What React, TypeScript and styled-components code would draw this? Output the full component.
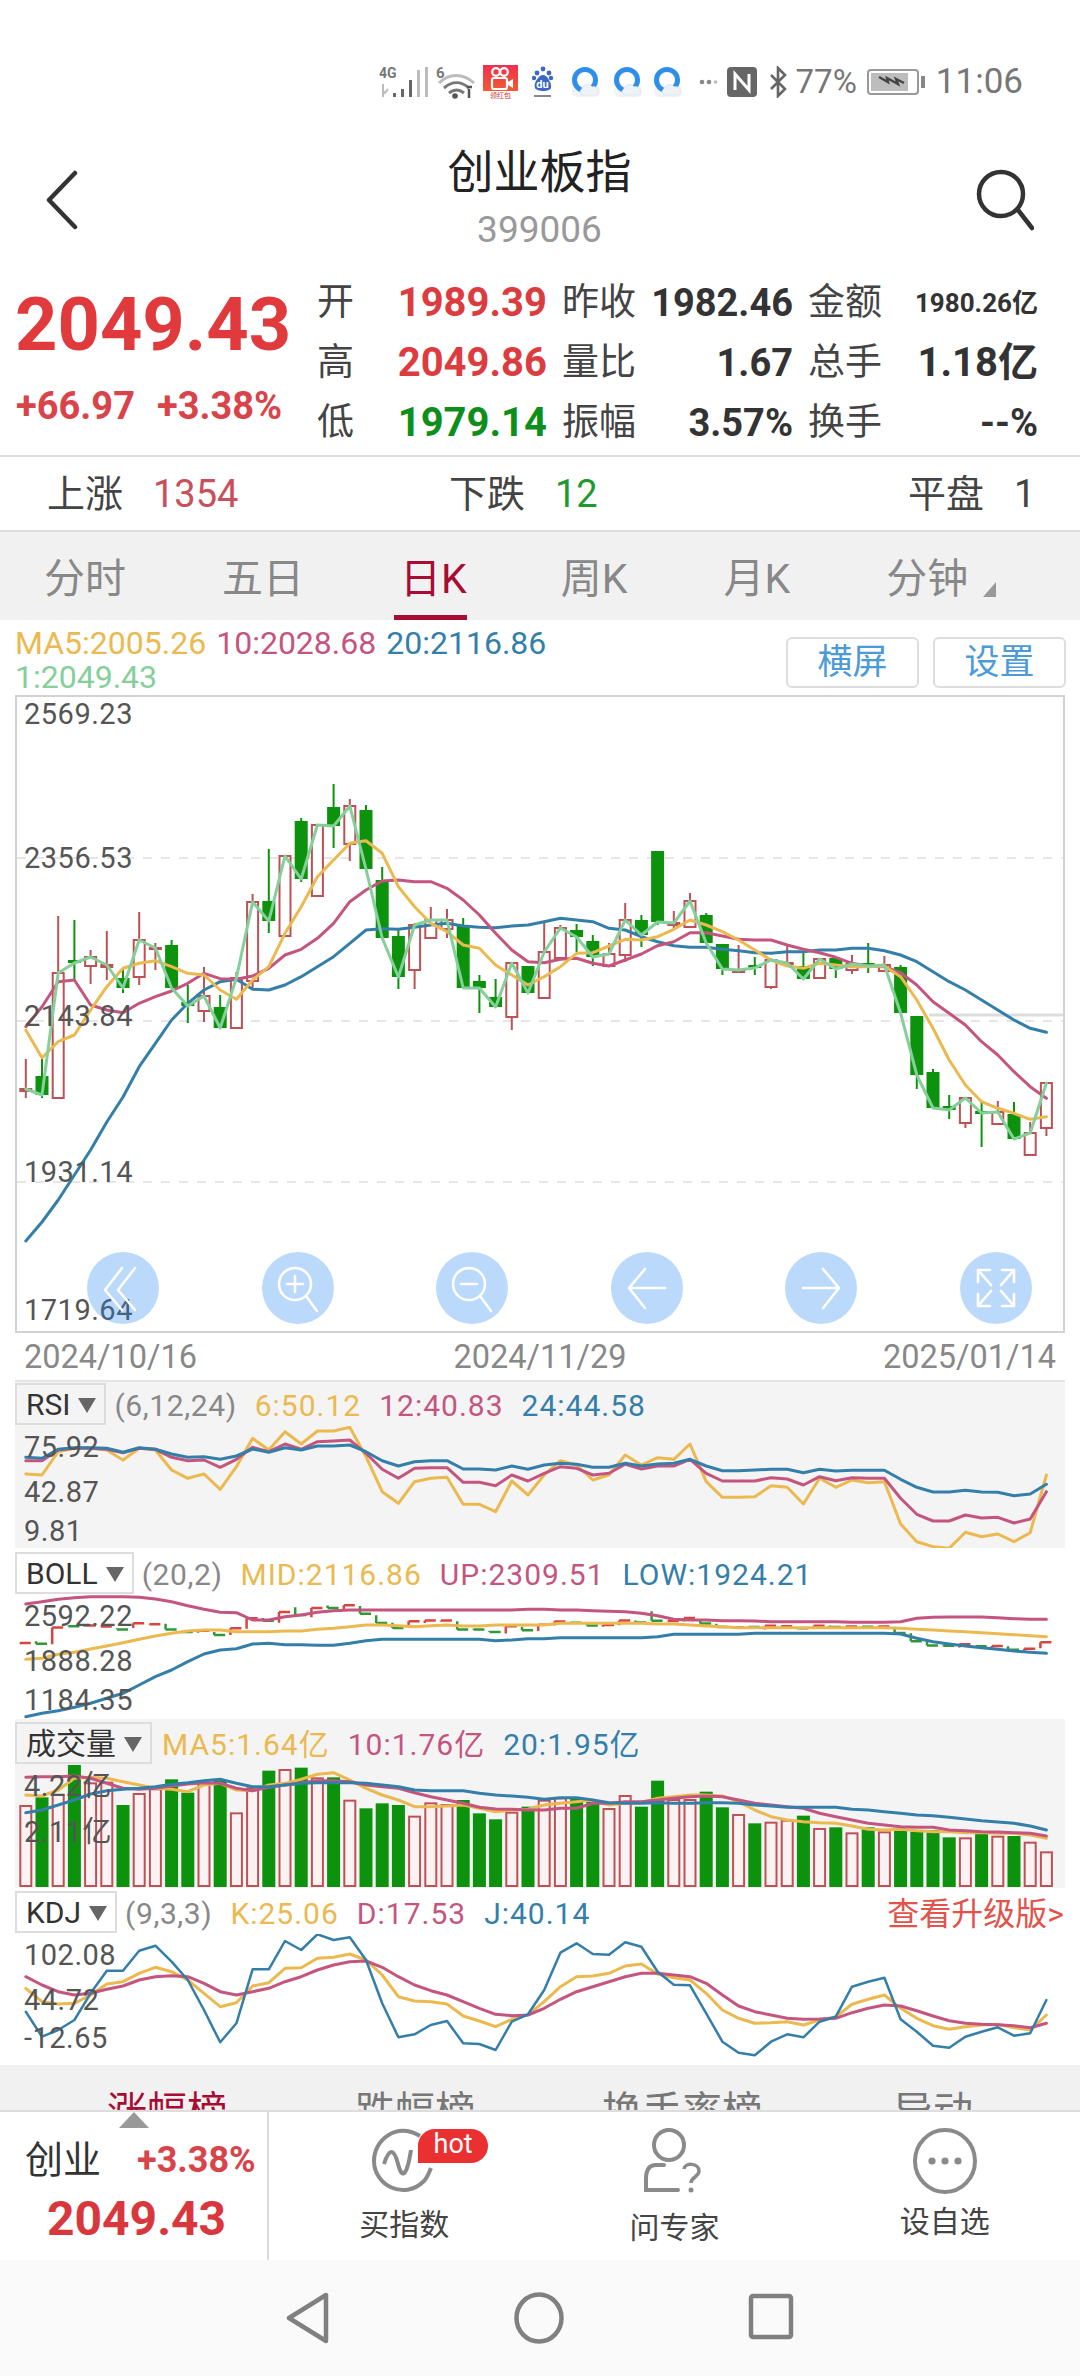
import React from "react";
import styled, { createGlobalStyle } from "styled-components";

const FONT = `Roboto, "Noto Sans CJK SC", "Noto Sans", sans-serif`;
const ORANGE = "#ebb94f";
const PINK = "#c4557f";
const BLUE = "#347fa9";
const LIME = "#85cf9b";
const RED = "#e03a3d";
const GREEN = "#0c920c";
const CRED = "#bd5156";

const Global = createGlobalStyle`
  html, body { margin: 0; padding: 0; background: #fff; }
  body { font-family: ${FONT}; }
  * { box-sizing: border-box; }
`;

const Page = styled.div`
  width: 1080px; height: 2376px; overflow: hidden; position: relative;
  display: flex; flex-direction: column; background: #fff; color: #333;
`;

/* status bar */
const StatusBar = styled.div`
  height: 130px; padding: 65px 57px 0 0; display: flex; justify-content: flex-end; align-items: flex-start;
`;
const StatusItems = styled.div`
  display: flex; align-items: center; height: 34px;
`;
const StatusText = styled.span<{ $size: number; $ml: number }>`
  font-size: ${p => p.$size}px; color: #777; margin-left: ${p => p.$ml}px; line-height: 34px; white-space: nowrap;
`;
const StatusIcon = styled.svg<{ $ml: number }>`
  margin-left: ${p => p.$ml}px; flex: none; display: block;
`;

/* header */
const Header = styled.div`
  height: 140px; display: grid; grid-template-columns: 1fr auto 1fr; align-items: center; padding: 0 46px 0 45px;
`;
const BackBtn = styled.svg`display: block;`;
const SearchBtn = styled.svg`display: block; justify-self: end;`;
const TitleBlock = styled.div`
  display: flex; flex-direction: column; align-items: center;
`;
const Title = styled.div`font-size: 46px; line-height: 60px; color: #222;`;
const Code = styled.div`font-size: 37px; line-height: 56px; color: #999;`;

/* quote */
const Quote = styled.div`
  height: 187px; display: flex; padding-top: 2px; border-bottom: 2px solid #ddd;
`;
const QuoteLeft = styled.div`width: 317px; padding-left: 15px; display: flex; flex-direction: column;`;
const BigPrice = styled.div`font-size: 74px; font-weight: 700; line-height: 106px; color: ${RED};`;
const Deltas = styled.div`
  display: flex; gap: 22px; font-size: 38px; font-weight: 700; color: #d9444a; line-height: 40px; margin-top: 8px; padding-left: 1px;
`;
const QuoteGrid = styled.div`
  display: grid; grid-template-columns: 80px 150px 87px 159px 88px 157px; grid-auto-rows: 60px; align-items: center; padding-top: 1px;
`;
const QLabel = styled.div<{ $pad?: boolean }>`
  font-size: 37px; color: #444; padding-left: ${p => (p.$pad ? 15 : 0)}px; line-height: 60px; white-space: nowrap;
`;
const QVal = styled.div<{ $color?: string; $size?: number }>`
  font-size: ${p => p.$size ?? 38}px; font-weight: 700; color: ${p => p.$color ?? "#333"}; text-align: right; line-height: 60px; white-space: nowrap;
`;

/* up/down counts */
const Stats = styled.div`
  height: 75px; display: grid; grid-template-columns: 402px 459px 1fr; align-items: center; padding-left: 47px; border-bottom: 2px solid #ddd; font-size: 38px; color: #444;
`;
const StatCell = styled.div`display: flex; align-items: baseline; gap: 30px; white-space: nowrap; line-height: 50px;`;
const StatNum = styled.span<{ $color: string }>`color: ${p => p.$color};`;

/* tabs */
const Tabs = styled.div`
  height: 88px; background: #f1f1f1; display: flex; padding-left: 44px; gap: 96px; flex: none;
`;
const Tab = styled.div<{ $active?: boolean }>`
  font-size: 41px; line-height: 94px; height: 88px; white-space: nowrap; display: flex; align-items: flex-start;
  color: ${p => (p.$active ? "#a80b33" : "#888")};
  ${p => p.$active ? `border-bottom: 5px solid #a80b33; margin: 0 -2px 0 -6px; padding-left: 6px;` : ""}
`;
const TabTri = styled.span`
  width: 0; height: 0; border-style: solid; border-width: 0 0 15px 13px; border-color: transparent transparent #999 transparent; margin: 50px 0 0 15px;
`;

/* legend */
const LegendRow = styled.div`
  height: 75px; padding: 6px 14px 0 15px; display: flex; justify-content: space-between; align-items: flex-start;
`;
const Legend = styled.div`font-size: 32px; line-height: 32px;`;
const LegendLine = styled.div`display: flex; gap: 10px; height: 34px; line-height: 34px;`;
const Colored = styled.span<{ $c: string }>`color: ${p => p.$c}; white-space: nowrap;`;
const LegendBtns = styled.div`display: flex; gap: 14px; margin-top: 11px;`;
const LegendBtn = styled.div`
  width: 133px; height: 51px; border: 2px solid #ddd; border-radius: 6px; color: #4b9bd6; font-size: 35px; line-height: 47px; text-align: center;
`;

/* chart */
const ChartBox = styled.div`
  margin: 0 15px; height: 638px; border: 2px solid #d2d2d2; position: relative; flex: none;
`;
const ChartSvg = styled.svg`display: block;`;
const Tools = styled.div`
  position: absolute; left: 70px; right: 31px; top: 555px; display: flex; justify-content: space-between;
`;
const ToolBtn = styled.div`
  width: 72px; height: 72px; border-radius: 50%; background: rgba(30, 130, 240, 0.3); display: flex; align-items: center; justify-content: center;
`;
const DateRow = styled.div`
  margin: 0 15px; height: 49px; display: grid; grid-template-columns: 1fr auto 1fr; align-items: center; padding: 0 9px; font-size: 32.5px; color: #888; border-bottom: 2px solid #e4e4e4; flex: none;
`;
const DateEnd = styled.span`justify-self: end;`;

/* indicator panels */
const Panel = styled.div<{ $bg: string; $h: number }>`
  margin: 0 15px; height: ${p => p.$h}px; background: ${p => p.$bg}; flex: none; display: flex; flex-direction: column;
`;
const PanelHead = styled.div<{ $h: number; $top: number }>`
  height: ${p => p.$h}px; padding-top: ${p => p.$top}px; display: flex; align-items: flex-start; font-size: 30px; letter-spacing: 1px; white-space: nowrap; flex: none; line-height: 42px;
`;
const Selector = styled.div`
  height: 42px; border: 2px solid #ddd; padding: 2px 8px 0 9px; display: flex; align-items: center; color: #333; gap: 8px; letter-spacing: 0;
`;
const SelTri = styled.span`
  width: 0; height: 0; border-style: solid; border-width: 15px 9px 0 9px; border-color: #666 transparent transparent transparent;
`;
const Param = styled.span`color: #888; margin: 2px 0 0 8px; letter-spacing: .6px;`;
const Val = styled.span<{ $c: string; $ml?: number }>`
  color: ${p => p.$c}; margin: 2px 0 0 ${p => p.$ml ?? 18}px;
`;
const Upgrade = styled.span`margin: 2px 1px 0 auto; color: #e1534b; font-size: 32px; letter-spacing: 0;`;

/* clipped sub tabs */
const SubTabs = styled.div`
  height: 45px; background: #f1f1f1; overflow: hidden; position: relative; flex: none; margin-top: 0;
  display: grid; grid-template-columns: 107px 248px 247px 291px 1fr; padding-top: 27px; font-size: 40px; line-height: 40px; color: #777;
`;
const SubTab = styled.span<{ $active?: boolean }>`
  grid-column: auto; white-space: nowrap; color: ${p => (p.$active ? "#a80b33" : "#777")};
`;

/* bottom actions */
const ActionBar = styled.div`
  height: 150px; border-top: 2px solid #ddd; display: grid; grid-template-columns: 269px repeat(3, 1fr); position: relative; flex: none;
`;
const UpArrow = styled.span`
  position: absolute; left: 119px; top: 0; width: 0; height: 0; border-style: solid; border-width: 0 15px 16px 15px; border-color: transparent transparent #999 transparent;
`;
const IndexCell = styled.div`border-right: 2px solid #ddd; padding: 25px 0 0 25px;`;
const IndexTop = styled.div`display: flex; align-items: center; gap: 36px; line-height: 46px;`;
const IndexName = styled.span`font-size: 38px; color: #333;`;
const IndexPct = styled.span`font-size: 36px; font-weight: 700; color: #d9444a;`;
const IndexPrice = styled.div`font-size: 48px; font-weight: 700; color: #d9373e; margin: 6px 0 0 22px; line-height: 60px;`;
const Action = styled.div<{ $shift: number }>`
  display: flex; flex-direction: column; align-items: center; padding-top: 16px; position: relative; gap: ${p => p.$shift}px; font-size: 30px; color: #444; line-height: 38px;
`;
const ActionIcon = styled.div`width: 64px; height: 66px; position: relative;`;
const Hot = styled.span`
  position: absolute; left: 46px; top: 1px; width: 70px; height: 34px; background: #ea3030; color: #fff; font-size: 27px; line-height: 31px; text-align: center; border-radius: 17px 17px 17px 0;
`;

/* navigation bar */
const NavBar = styled.div`
  flex: 1; background: #fafafa; display: flex; align-items: flex-start; justify-content: center; gap: 0; padding-top: 32px;
`;
const NavIcon = styled.svg<{ $ml: number }>`display: block; margin-left: ${p => p.$ml}px;`;

/* data */
const X = (i: number) => 25.8 + 16.2 * i;
type Candle = [number, number, number, number, number];
const CANDLES: Candle[] = [
  [1,1089,1091,1059,1098],[0,1076,1095,1059,1098],[1,973,1098,916,1098],[0,960,963,920,980],[1,957,966,950,984],
  [1,965,967,931,980],[0,978,988,968,993],[1,940,977,912,985],[1,948,949,943,970],[0,945,988,940,988],
  [0,1002,1006,985,1023],[1,996,1011,967,1022],[0,1007,1028,995,1028],[1,978,1028,972,1028],[1,902,981,894,990],
  [0,901,921,849,933],[1,856,936,856,936],[0,821,879,818,882],[1,825,896,825,896],[0,807,826,784,848],
  [1,806,844,799,861],[0,810,869,805,869],[0,880,938,867,938],[0,936,977,930,989],[1,925,970,923,989],
  [1,920,938,907,938],[1,920,929,909,938],[0,925,988,918,988],[0,981,988,975,1013],[0,997,1007,979,1007],
  [1,963,1017,963,1030],[0,966,993,966,993],[1,952,998,923,998],[1,928,958,925,958],[0,930,937,924,952],
  [0,941,957,935,966],[1,954,966,943,966],[1,920,955,903,962],[0,920,935,915,947],[0,851,922,851,925],
  [1,923,925,911,929],[1,901,927,893,927],[0,915,943,913,943],[0,944,969,944,975],[1,970,972,945,972],
  [0,965,968,957,975],[1,960,987,958,989],[1,963,964,945,967],[0,966,979,952,979],[1,959,978,959,978],
  [0,958,969,958,978],[1,964,970,955,974],[0,963,966,943,973],[1,965,971,956,971],[0,967,1013,965,1013],
  [0,1016,1075,1016,1089],[0,1072,1108,1069,1108],[0,1106,1110,1095,1119],[1,1098,1123,1098,1128],[0,1111,1113,1102,1147],
  [1,1112,1124,1101,1124],[0,1114,1139,1102,1139],[1,1133,1155,1122,1155],[1,1083,1128,1083,1136],
];
const MA5L = [1020,1103,1055,1035,960,890,835,820,812,830,850,855,900,928,870,830,730,650,560,510,460,452,490,590,650,700,725,765,775,825,855,885];
const MA5R = [590,560,520,518,498,478,480,470,448,420,435,455,480,510,540,558,565,550,555,560,560,558,590,660,745,840,915,965,985,1000,1018,1010];
const MA10L = [1010,950,875,870,945,960,968,940,920,903,880,850,866,868,858,835,795,778,745,700,635,600,573,570,575,575,595,630,675,730,780,815];
const MA10R = [548,538,535,550,558,540,522,497,485,458,458,468,478,480,480,495,508,518,532,550,558,560,578,615,665,700,735,785,825,875,920,955];
const MA20L = [1653,1596,1530,1455,1380,1296,1221,1130,1060,990,940,900,875,868,898,900,885,860,830,800,760,720,716,718,712,705,700,708,712,713,708,705];
const MA20R = [425,415,420,425,445,450,470,485,497,502,502,508,512,518,520,515,515,510,510,505,505,512,525,545,575,605,630,660,690,720,745,757];

const RSI6 = [312,315,245,235,235,240,270,235,240,300,325,312,358,290,205,240,185,222,183,183,172,260,365,400,335,325,322,403,403,425,333,375,315,272,285,330,315,255,285,263,268,222,335,382,382,380,347,352,402,325,352,330,338,335,462,515,530,535,487,500,492,515,488,315];
const RSI12 = [272,272,240,235,235,238,248,235,238,262,272,270,292,268,232,245,222,238,215,213,210,250,298,325,295,293,293,337,337,347,315,333,310,290,295,315,310,283,297,288,288,268,310,333,333,333,323,327,345,320,332,323,325,325,385,433,453,453,435,444,442,459,447,365];
const RSI24 = [262,265,238,233,233,235,247,233,238,252,262,260,268,258,237,247,233,240,228,228,225,245,272,288,275,272,272,297,297,300,288,298,285,280,283,292,292,280,288,282,280,268,288,302,302,300,298,298,308,298,303,301,301,301,328,352,366,366,361,366,367,377,372,343];

const UP = [702,695,688,683,680,680,680,682,687,695,707,718,727,728,750,750,740,735,727,722,720,720,720,720,720,720,720,720,720,720,720,718,718,720,720,722,724,725,730,737,748,750,750,752,752,753,755,755,755,755,755,757,757,757,755,745,742,741,741,741,743,746,748,748];
const MID = [868,865,853,847,837,828,818,808,798,790,783,780,780,785,785,785,783,783,778,775,770,765,765,767,770,767,765,768,768,765,765,765,765,760,760,760,760,760,760,762,762,765,768,770,773,773,773,773,773,773,773,773,773,773,775,778,780,783,785,788,791,794,797,800];
const LOW = [1040,1030,1022,1012,1000,985,970,945,920,900,875,852,840,836,822,820,824,824,826,826,820,812,808,808,808,808,808,808,808,812,810,806,806,803,803,803,803,803,803,800,793,793,793,793,793,790,790,790,790,790,790,790,790,790,792,805,815,822,828,833,838,843,847,850];

const VOL = [1308,1282,1275,1185,1240,1238,1305,1272,1258,1228,1268,1240,1232,1330,1255,1202,1200,1193,1225,1222,1292,1315,1300,1305,1340,1300,1305,1290,1330,1348,1328,1310,1292,1285,1285,1295,1317,1278,1310,1232,1290,1290,1265,1312,1335,1360,1358,1352,1337,1377,1372,1390,1372,1387,1380,1385,1380,1402,1405,1392,1400,1398,1418,1447];
const VOLM5 = [1275,1278,1260,1225,1222,1225,1235,1245,1255,1258,1265,1245,1240,1260,1262,1245,1240,1228,1213,1208,1230,1255,1275,1290,1310,1310,1308,1305,1315,1325,1320,1318,1305,1300,1295,1290,1305,1300,1298,1285,1280,1275,1275,1278,1295,1320,1340,1350,1355,1358,1360,1368,1378,1380,1378,1382,1385,1385,1388,1388,1390,1390,1395,1405];
const VOLM10 = [1222,1220,1220,1218,1225,1240,1255,1258,1255,1248,1242,1238,1240,1255,1262,1252,1245,1238,1232,1232,1235,1245,1250,1255,1268,1280,1290,1300,1312,1317,1318,1320,1320,1315,1315,1300,1300,1295,1295,1290,1285,1280,1278,1280,1290,1300,1305,1310,1315,1330,1340,1350,1360,1365,1370,1372,1372,1380,1382,1385,1386,1388,1390,1398];
const VOLM20 = [1328,1320,1305,1290,1272,1262,1258,1255,1250,1243,1238,1232,1228,1240,1250,1250,1245,1240,1238,1238,1238,1240,1245,1250,1260,1262,1262,1262,1270,1275,1278,1282,1288,1283,1283,1290,1298,1300,1300,1298,1300,1300,1298,1298,1300,1305,1308,1312,1312,1312,1312,1318,1320,1325,1330,1335,1337,1342,1347,1352,1356,1360,1368,1380];

const KJ = [395,470,450,420,340,272,272,212,197,245,300,390,487,430,268,268,183,210,163,180,172,240,370,472,463,435,423,490,492,510,425,403,330,218,190,222,224,187,200,275,314,316,400,485,518,526,485,463,472,425,410,320,305,293,418,455,497,503,470,455,442,467,460,360];
const KK = [325,365,372,370,345,312,305,280,262,275,300,340,380,368,318,308,265,263,235,232,222,240,285,350,363,365,372,408,423,440,418,404,365,320,290,288,280,258,252,282,293,300,340,390,415,430,428,425,435,420,410,373,358,345,385,415,437,448,440,435,433,443,450,405];
const KD = [290,315,335,345,340,328,318,300,290,287,290,310,335,345,335,325,305,290,270,255,245,243,262,290,315,332,345,365,385,403,407,405,385,358,335,320,305,290,280,280,285,290,310,345,378,395,405,415,418,417,415,398,385,375,378,392,408,422,430,433,434,437,443,430];

const pts = (a: number[], base: number) => a.map((z, i) => `${X(i).toFixed(1)},${(base + z / 3).toFixed(1)}`).join(" ");
const mainPts = (l: number[], r: number[]) => pts(l, 690) + " " + r.map((z, i) => `${X(i + 32).toFixed(1)},${(780 + z / 3).toFixed(1)}`).join(" ");
const CLOSES = CANDLES.map((c, i) => `${X(i).toFixed(1)},${c[0] ? c[1] : c[2]}`).join(" ");

const Line = ({ p, c, w = 3 }: { p: string; c: string; w?: number }) => (
  <polyline points={p} fill="none" stroke={c} strokeWidth={w} strokeLinejoin="round" strokeLinecap="round" />
);
const AxisText = ({ x = 24, y, children }: { x?: number; y: number; children: React.ReactNode }) => (
  <text x={x} y={y} fontSize={29} fill="#555" letterSpacing={0.5} dominantBaseline="central" fontFamily={FONT}>{children}</text>
);

const MainChart = () => (
  <ChartSvg width={1046} height={634} viewBox="17 697 1046 634">
    {[858, 1021, 1182].map(y => (
      <line key={y} x1={17} x2={1063} y1={y} y2={y} stroke="#e6e6e6" strokeWidth={2} strokeDasharray="9 9" />
    ))}
    <line x1={929} x2={1063} y1={1015} y2={1015} stroke="#ddd" strokeWidth={3} />
    {CANDLES.map((c, i) => {
      const x = X(i);
      const col = c[0] ? CRED : GREEN;
      return (
        <g key={i}>
          <line x1={x} x2={x} y1={c[3]} y2={c[4]} stroke={col} strokeWidth={2} />
          {c[0]
            ? <rect x={x - 5.5} y={c[1]} width={11} height={Math.max(c[2] - c[1], 1)} fill="#fff" stroke={col} strokeWidth={2} />
            : <rect x={x - 6.5} y={c[1]} width={13} height={Math.max(c[2] - c[1], 3)} fill={col} />}
        </g>
      );
    })}
    <Line p={mainPts(MA20L, MA20R)} c={BLUE} />
    <Line p={mainPts(MA10L, MA10R)} c={PINK} />
    <Line p={mainPts(MA5L, MA5R)} c={ORANGE} />
    <Line p={CLOSES} c={LIME} />
    <AxisText y={714}>2569.23</AxisText>
    <AxisText y={858}>2356.53</AxisText>
    <AxisText y={1016}>2143.84</AxisText>
    <AxisText y={1172}>1931.14</AxisText>
    <AxisText y={1310}>1719.64</AxisText>
  </ChartSvg>
);

const SubSvg = ({ top, h, children }: { top: number; h: number; children: React.ReactNode }) => (
  <ChartSvg width={1050} height={h} viewBox={`15 ${top} 1050 ${h}`}>{children}</ChartSvg>
);

const RsiChart = () => (
  <SubSvg top={1426} h={122}>
    <Line p={pts(RSI6, 1370)} c={ORANGE} />
    <Line p={pts(RSI12, 1370)} c={PINK} />
    <Line p={pts(RSI24, 1370)} c={BLUE} />
    <AxisText y={1447}>75.92</AxisText>
    <AxisText y={1492}>42.87</AxisText>
    <AxisText y={1531}>9.81</AxisText>
  </SubSvg>
);

const by = (y: number) => 1643 + (y - 1089) * 0.133;
const BollChart = () => (
  <SubSvg top={1594} h={125}>
    {CANDLES.map((c, i) => {
      const x = X(i);
      const col = c[0] ? "#d8453f" : "#2f9a35";
      const open = c[0] ? c[2] : c[1];
      const close = c[0] ? c[1] : c[2];
      return (
        <path key={i} d={`M${x - 6} ${by(close)}H${x + 5}M${x - 6} ${by(open)}V${by(close)}`} fill="none" stroke={col} strokeWidth={2.5} />
      );
    })}
    <Line p={pts(UP, 1370)} c={PINK} />
    <Line p={pts(MID, 1370)} c={ORANGE} />
    <Line p={pts(LOW, 1370)} c={BLUE} />
    <AxisText y={1616}>2592.22</AxisText>
    <AxisText y={1661}>1888.28</AxisText>
    <AxisText y={1700}>1184.35</AxisText>
  </SubSvg>
);

const VolChart = () => (
  <SubSvg top={1764} h={124}>
    {VOL.map((z, i) => {
      const x = X(i);
      const top = 1370 + z / 3;
      return CANDLES[i][0]
        ? <rect key={i} x={x - 5.5} y={top} width={11} height={1886 - top} fill="#fbf3f3" stroke={CRED} strokeWidth={2} />
        : <rect key={i} x={x - 6.5} y={top} width={13} height={1887 - top} fill={GREEN} />;
    })}
    <Line p={pts(VOLM5, 1370)} c={ORANGE} />
    <Line p={pts(VOLM10, 1370)} c={PINK} />
    <Line p={pts(VOLM20, 1370)} c={BLUE} />
    <AxisText y={1786}>4.22亿</AxisText>
    <AxisText y={1832}>2.11亿</AxisText>
  </SubSvg>
);

const KdjChart = () => (
  <SubSvg top={1934} h={131}>
    <Line p={pts(KK, 1880)} c={ORANGE} />
    <Line p={pts(KD, 1880)} c={PINK} />
    <Line p={pts(KJ, 1880)} c={BLUE} w={2.5} />
    <AxisText y={1955}>102.08</AxisText>
    <AxisText y={2000}>44.72</AxisText>
    <AxisText y={2038}>-12.65</AxisText>
  </SubSvg>
);

const ToolIcon = ({ children }: { children: React.ReactNode }) => (
  <svg width={50} height={50} viewBox="0 0 50 50" fill="none" stroke="#fff" strokeWidth={2.6} strokeLinecap="round" strokeLinejoin="round">{children}</svg>
);

const TOOLS = [
  <><path d="M24 5 7 27l17 20" /><path d="M37 5 20 27l17 20" /></>,
  <><circle cx={22} cy={21} r={16} /><path d="M22 13v16M14 21h16M33 33l11 15" /></>,
  <><circle cx={22} cy={21} r={16} /><path d="M14 21h16M33 33l11 15" /></>,
  <><path d="M7 25h36M23 6 7 25l16 20" /></>,
  <><path d="M7 25h36M27 6l16 19-16 20" /></>,
  <><path d="M7 7h12M7 7v12M7 7l13 15M43 7H31M43 7v12M43 7 30 22M7 43h12M7 43V31M7 43l13-15M43 43H31M43 43V31M43 43 30 28" /></>,
];

const Qicon = ({ ml }: { ml: number }) => (
  <StatusIcon $ml={ml} width={30} height={30} viewBox="0 0 30 30">
    <rect x={1} y={18} width={28} height={12} rx={5} fill="#f0f4f9" />
    <circle cx={14} cy={13} r={10.5} fill="#fff" stroke="#2f8fe8" strokeWidth={5} />
    <path d="M12 28c-3 0-4-4-1-6 0-5 8-6 10-2 4-1 7 2 6 4 1 2 0 4-2 4z" fill="#eef3f8" stroke="#dfe7f0" strokeWidth={1} />
  </StatusIcon>
);

export default function App() {
  return (
    <Page>
      <Global />
      <StatusBar>
        <StatusItems>
          <StatusIcon $ml={0} width={50} height={34} viewBox="0 0 50 34">
            <text x={0} y={13} fontSize={14} fontWeight={700} fill="#777" fontFamily={FONT}>4G</text>
            <path d="M4 19v13M9 24l-3 4-2-2M0 25" stroke="#bbb" strokeWidth={2} fill="none" />
            <path d="M14 28h3v4h-3zM22 24h3v8h-3zM30 15h3v17h-3z" fill="#666" />
            <path d="M38 5h3v27h-3zM46 2h3v30h-3z" fill="#bbb" />
          </StatusIcon>
          <StatusIcon $ml={7} width={40} height={34} viewBox="0 0 40 34">
            <text x={0} y={13} fontSize={15} fontWeight={700} fill="#777" fontFamily={FONT}>6</text>
            <path d="M3 18C13 8 27 8 38 18" stroke="#bbb" strokeWidth={3} fill="none" />
            <path d="M8 23c8-7 17-7 25 0" stroke="#777" strokeWidth={3} fill="none" />
            <path d="M13 28c5-4 10-4 15 0" stroke="#777" strokeWidth={3} fill="none" />
            <circle cx={19} cy={31} r={2.8} fill="#555" />
            <path d="M31 22h5M33 33v-9" stroke="#555" strokeWidth={2.5} />
          </StatusIcon>
          <StatusIcon $ml={7} width={35} height={34} viewBox="0 0 35 34">
            <defs>
              <linearGradient id="redapp" x1="0" y1="0" x2="0" y2="1">
                <stop offset="0" stopColor="#ef3050" />
                <stop offset=".75" stopColor="#f25b30" />
                <stop offset=".76" stopColor="#fff" />
              </linearGradient>
            </defs>
            <rect width={35} height={34} fill="url(#redapp)" />
            <circle cx={13} cy={7} r={3.8} fill="none" stroke="#fff" strokeWidth={2.2} />
            <circle cx={21} cy={7} r={3.8} fill="none" stroke="#fff" strokeWidth={2.2} />
            <rect x={9} y={13} width={15} height={11} rx={2} fill="none" stroke="#fff" strokeWidth={2.2} />
            <path d="M25 17l5-3v9l-5-3z" fill="#fff" />
            <text x={17.5} y={33} fontSize={7} textAnchor="middle" fill="#c33" fontFamily={FONT}>领红包</text>
          </StatusIcon>
          <StatusIcon $ml={13} width={23} height={32} viewBox="0 0 23 32">
            <circle cx={6} cy={7} r={2.4} fill="#3b68c4" />
            <circle cx={12} cy={3} r={2.4} fill="#3b68c4" />
            <circle cx={18} cy={7} r={2.4} fill="#3b68c4" />
            <circle cx={3} cy={12} r={2.2} fill="#3b68c4" />
            <circle cx={20} cy={12} r={2.2} fill="#3b68c4" />
            <path d="M12 9c4 0 9 8 8 13-1 4-14 4-16 0-2-5 4-13 8-13z" fill="#3b68c4" />
            <text x={11.5} y={22} fontSize={11} fontWeight={700} textAnchor="middle" fill="#fff" fontFamily={FONT}>du</text>
            <rect x={3} y={29} width={17} height={2} fill="#888" />
          </StatusIcon>
          <Qicon ml={17} />
          <Qicon ml={12} />
          <Qicon ml={10} />
          <StatusIcon $ml={16} width={19} height={6} viewBox="0 0 19 6">
            <circle cx={3} cy={3} r={2.3} fill="#888" />
            <circle cx={10} cy={3} r={2.3} fill="#888" />
            <circle cx={16.5} cy={3} r={1.8} fill="#bbb" />
          </StatusIcon>
          <StatusIcon $ml={9} width={30} height={30} viewBox="0 0 30 30">
            <rect width={30} height={30} rx={4} fill="#666" />
            <path d="M8 23V7l14 16V7" fill="none" stroke="#fff" strokeWidth={3} />
          </StatusIcon>
          <StatusIcon $ml={12} width={18} height={32} viewBox="0 0 18 32">
            <path d="M2 9l14 14-7 7V2l7 7L2 23" fill="none" stroke="#666" strokeWidth={2.6} />
          </StatusIcon>
          <StatusText $size={33} $ml={9}>77%</StatusText>
          <StatusIcon $ml={10} width={58} height={26} viewBox="0 0 58 26">
            <rect x={1} y={1} width={50} height={24} rx={3} fill="none" stroke="#999" strokeWidth={2} />
            <rect x={4} y={4} width={37} height={18} fill="#bdbdbd" />
            <path d="M12 8l9 5-1-4 11 6-2-5 8 4" fill="none" stroke="#444" strokeWidth={2.4} />
            <rect x={54} y={7} width={4} height={12} fill="#888" />
          </StatusIcon>
          <StatusText $size={35} $ml={11}>11:06</StatusText>
        </StatusItems>
      </StatusBar>

      <Header>
        <BackBtn width={34} height={60} viewBox="0 0 34 60">
          <path d="M30 3 4 30l26 27" fill="none" stroke="#333" strokeWidth={4.5} strokeLinecap="round" strokeLinejoin="round" />
        </BackBtn>
        <TitleBlock>
          <Title>创业板指</Title>
          <Code>399006</Code>
        </TitleBlock>
        <SearchBtn width={58} height={62} viewBox="0 0 58 62">
          <circle cx={25} cy={25} r={22} fill="none" stroke="#333" strokeWidth={4.5} />
          <path d="M42 41l14 18" stroke="#333" strokeWidth={4.5} strokeLinecap="round" />
        </SearchBtn>
      </Header>

      <Quote>
        <QuoteLeft>
          <BigPrice>2049.43</BigPrice>
          <Deltas><span>+66.97</span><span>+3.38%</span></Deltas>
        </QuoteLeft>
        <QuoteGrid>
          <QLabel>开</QLabel><QVal $color="#dc3c40" $size={40}>1989.39</QVal>
          <QLabel $pad>昨收</QLabel><QVal>1982.46</QVal>
          <QLabel $pad>金额</QLabel><QVal $size={26}>1980.26亿</QVal>
          <QLabel>高</QLabel><QVal $color="#dc3c40" $size={40}>2049.86</QVal>
          <QLabel $pad>量比</QLabel><QVal>1.67</QVal>
          <QLabel $pad>总手</QLabel><QVal $size={40}>1.18亿</QVal>
          <QLabel>低</QLabel><QVal $color="#0e8f1c" $size={40}>1979.14</QVal>
          <QLabel $pad>振幅</QLabel><QVal>3.57%</QVal>
          <QLabel $pad>换手</QLabel><QVal>--%</QVal>
        </QuoteGrid>
      </Quote>

      <Stats>
        <StatCell>上涨<StatNum $color="#c9505a">1354</StatNum></StatCell>
        <StatCell>下跌<StatNum $color="#1f9a30">12</StatNum></StatCell>
        <StatCell>平盘<StatNum $color="#444">1</StatNum></StatCell>
      </Stats>

      <Tabs>
        <Tab>分时</Tab>
        <Tab>五日</Tab>
        <Tab $active>日K</Tab>
        <Tab>周K</Tab>
        <Tab>月K</Tab>
        <Tab>分钟<TabTri /></Tab>
      </Tabs>

      <LegendRow>
        <Legend>
          <LegendLine>
            <Colored $c={ORANGE}>MA5:2005.26</Colored>
            <Colored $c={PINK}>10:2028.68</Colored>
            <Colored $c={BLUE}>20:2116.86</Colored>
          </LegendLine>
          <LegendLine><Colored $c={LIME}>1:2049.43</Colored></LegendLine>
        </Legend>
        <LegendBtns>
          <LegendBtn>横屏</LegendBtn>
          <LegendBtn>设置</LegendBtn>
        </LegendBtns>
      </LegendRow>

      <ChartBox>
        <MainChart />
        <Tools>
          {TOOLS.map((t, i) => (
            <ToolBtn key={i}><ToolIcon>{t}</ToolIcon></ToolBtn>
          ))}
        </Tools>
      </ChartBox>
      <DateRow>
        <span>2024/10/16</span>
        <span>2024/11/29</span>
        <DateEnd>2025/01/14</DateEnd>
      </DateRow>

      <Panel $bg="#f4f4f4" $h={166}>
        <PanelHead $h={44} $top={1}>
          <Selector>RSI<SelTri /></Selector>
          <Param>(6,12,24)</Param>
          <Val $c={ORANGE}>6:50.12</Val>
          <Val $c={PINK}>12:40.83</Val>
          <Val $c={BLUE}>24:44.58</Val>
        </PanelHead>
        <RsiChart />
      </Panel>
      <Panel $bg="#fff" $h={171}>
        <PanelHead $h={46} $top={4}>
          <Selector>BOLL<SelTri /></Selector>
          <Param>(20,2)</Param>
          <Val $c={ORANGE}>MID:2116.86</Val>
          <Val $c={PINK}>UP:2309.51</Val>
          <Val $c={BLUE}>LOW:1924.21</Val>
        </PanelHead>
        <BollChart />
      </Panel>
      <Panel $bg="#f4f4f4" $h={169}>
        <PanelHead $h={45} $top={3}>
          <Selector>成交量<SelTri /></Selector>
          <Val $c={ORANGE} $ml={10}>MA5:1.64亿</Val>
          <Val $c={PINK}>10:1.76亿</Val>
          <Val $c={BLUE}>20:1.95亿</Val>
        </PanelHead>
        <VolChart />
      </Panel>
      <Panel $bg="#fff" $h={177}>
        <PanelHead $h={46} $top={3}>
          <Selector>KDJ<SelTri /></Selector>
          <Param>(9,3,3)</Param>
          <Val $c={ORANGE}>K:25.06</Val>
          <Val $c={PINK}>D:17.53</Val>
          <Val $c={BLUE}>J:40.14</Val>
          <Upgrade>查看升级版&gt;</Upgrade>
        </PanelHead>
        <KdjChart />
      </Panel>

      <SubTabs>
        <span />
        <SubTab $active>涨幅榜</SubTab>
        <SubTab>跌幅榜</SubTab>
        <SubTab>换手率榜</SubTab>
        <SubTab>异动</SubTab>
      </SubTabs>

      <ActionBar>
        <UpArrow />
        <IndexCell>
          <IndexTop>
            <IndexName>创业</IndexName>
            <IndexPct>+3.38%</IndexPct>
          </IndexTop>
          <IndexPrice>2049.43</IndexPrice>
        </IndexCell>
        <Action $shift={12}>
          <ActionIcon>
            <svg width={64} height={66} viewBox="0 0 64 66" fill="none" stroke="#8a8a8a" strokeWidth={4}>
              <path d="M48 8C24-6 2 12 2 33c0 24 30 40 50 20 3-3 5-8 7-13" />
              <path d="M12 36c5-16 10-16 14 0s9 12 13-14" />
            </svg>
            <Hot>hot</Hot>
          </ActionIcon>
          <span>买指数</span>
        </Action>
        <Action $shift={15}>
          <ActionIcon>
            <svg width={64} height={66} viewBox="0 0 64 66" fill="none" stroke="#8a8a8a" strokeWidth={4}>
              <circle cx={27} cy={17} r={15} />
              <path d="M22 37H14c-8 0-10 6-10 14v11h32" strokeLinecap="round" />
              <path d="M42 41c1-7 15-6 15 2 0 6-8 6-8 12" strokeWidth={3.5} />
              <circle cx={49} cy={62} r={2.5} fill="#8a8a8a" stroke="none" />
            </svg>
          </ActionIcon>
          <span>问专家</span>
        </Action>
        <Action $shift={9}>
          <ActionIcon>
            <svg width={64} height={66} viewBox="0 0 64 66" fill="none">
              <ellipse cx={32} cy={33} rx={30} ry={31} stroke="#8a8a8a" strokeWidth={4} />
              <circle cx={19} cy={33} r={3.6} fill="#8a8a8a" />
              <circle cx={32} cy={33} r={3.6} fill="#8a8a8a" />
              <circle cx={45} cy={33} r={3.6} fill="#8a8a8a" />
            </svg>
          </ActionIcon>
          <span>设自选</span>
        </Action>
      </ActionBar>

      <NavBar>
        <NavIcon $ml={0} width={44} height={52} viewBox="0 0 44 52">
          <path d="M40 3v46L3 26z" fill="none" stroke="#808080" strokeWidth={4.5} strokeLinejoin="round" />
        </NavIcon>
        <NavIcon $ml={184} width={50} height={52} viewBox="0 0 50 52">
          <ellipse cx={25} cy={26} rx={22.5} ry={23.5} fill="none" stroke="#808080" strokeWidth={4.5} />
        </NavIcon>
        <NavIcon $ml={184} width={46} height={50} viewBox="0 0 46 50">
          <rect x={3} y={4} width={40} height={41} rx={2} fill="none" stroke="#808080" strokeWidth={4.5} />
        </NavIcon>
      </NavBar>
    </Page>
  );
}
